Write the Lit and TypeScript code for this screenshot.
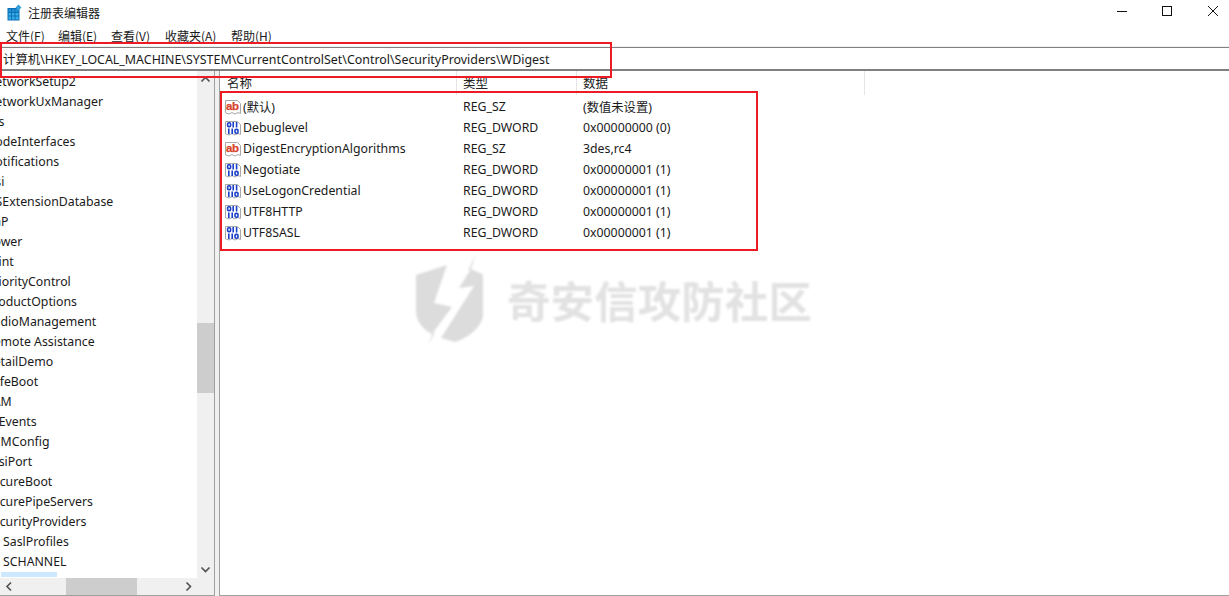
import { LitElement, html, css, svg } from "lit";
import { customElement } from "lit/decorators.js";

const TREE: [string, boolean][] = [
  ["NetworkSetup2", false], ["NetworkUxManager", false], ["Nls", false], ["NodeInterfaces", false],
  ["Notifications", false], ["Nsi", false], ["OSExtensionDatabase", false], ["PnP", false],
  ["Power", false], ["Print", false], ["PriorityControl", false], ["ProductOptions", false],
  ["RadioManagement", false], ["Remote Assistance", false], ["RetailDemo", false], ["SafeBoot", false],
  ["SAM", false], ["ScEvents", false], ["SCMConfig", false], ["ScsiPort", false],
  ["SecureBoot", false], ["SecurePipeServers", false], ["SecurityProviders", false],
  ["SaslProfiles", true], ["SCHANNEL", true],
];

const ROWS: [string, string, string][] = [
  ["(默认)", "REG_SZ", "(数值未设置)"],
  ["Debuglevel", "REG_DWORD", "0x00000000 (0)"],
  ["DigestEncryptionAlgorithms", "REG_SZ", "3des,rc4"],
  ["Negotiate", "REG_DWORD", "0x00000001 (1)"],
  ["UseLogonCredential", "REG_DWORD", "0x00000001 (1)"],
  ["UTF8HTTP", "REG_DWORD", "0x00000001 (1)"],
  ["UTF8SASL", "REG_DWORD", "0x00000001 (1)"],
];

const page = svg`<path d="M0.5 1.5H12.5L15.5 4.5V14.5L13 13.5L10 15L7 13.6L4 15L0.5 13.8Z" fill="#fff" stroke="#a8a8a8"/>`;
const abIcon = html`<svg class="ic" viewBox="0 0 16 16">${page}
  <text x="7.4" y="11" text-anchor="middle" font-family="Liberation Sans, sans-serif" font-weight="700" font-size="11.5" letter-spacing="-0.3" stroke="#d8452a" stroke-width="0.25" fill="#d8452a">ab</text></svg>`;
const binIcon = html`<svg class="ic" viewBox="0 0 16 16">${page}
  <g fill="none" stroke="#1a3fc8" stroke-width="1.6">
    <rect x="2.6" y="2.8" width="3" height="3.8" rx="1.2"/>
    <path d="M8.2 2V7.4M11.6 2V7.4"/>
    <path d="M3.8 8.6V14M7.2 8.6V14"/>
    <rect x="10" y="9.4" width="3" height="3.8" rx="1.2"/>
  </g></svg>`;

@customElement("app-root")
export class AppRoot extends LitElement {
  static styles = css`
    :host { display: block; position: relative; width: 1229px; height: 596px; overflow: hidden; background: #fff;
      font-family: "Noto Sans", "Noto Sans CJK SC", sans-serif; font-size: 12.3px; color: #1a1a1a; }
    .win { display: flex; flex-direction: column; height: 596px; }
    .title { height: 24px; flex: none; display: flex; align-items: center; padding-left: 7px; gap: 6px; font-size: 12px; }
    .title .name { font-family: "Noto Sans CJK SC", sans-serif; flex: 1; }
    .ctl { display: flex; align-self: flex-start; }
    .ctl svg { width: 46px; height: 22px; display: block; }
    .menu { height: 22px; flex: none; display: flex; align-items: center; padding-left: 6px; font-size: 12px; font-family: "Noto Sans CJK SC", sans-serif; border-bottom: 1px solid #f0f0f0; box-sizing: content-box; }
    .menu span { display: block; }
    .m1 { width: 52px; } .m2 { width: 53px; } .m3 { width: 54px; } .m4 { width: 66px; }
    .addr { height: 21px; flex: none; display: flex; align-items: center; padding-left: 3px; border-top: 1px solid #808080; border-bottom: 2px solid #808080; white-space: nowrap; font-size: 12.42px; }
    .panes { flex: 1; min-height: 0; display: flex; background: #f0f0f0; }
    .left { width: 214px; flex: none; display: grid; grid-template-columns: 197px 17px; grid-template-rows: 1fr 17px; border-right: 1px solid #a0a0a0; border-bottom: 1px solid #a0a0a0; }
    .tree { background: #fff; overflow: hidden; min-height: 0; padding-top: 1px; }
    .node { height: 20px; line-height: 20px; margin-left: -14px; white-space: nowrap; }
    .node.child { margin-left: 3px; }
    .sel { width: 56px; height: 5px; margin-left: 1px; background: #cce8ff; }
    .vbar { background: #f0f0f0; display: flex; flex-direction: column; min-height: 0; }
    .vbar svg, .hbar svg { flex: none; display: block; }
    .vtrack { flex: 1; padding-top: 235px; }
    .vthumb { height: 70px; background: #cdcdcd; }
    .corner { background: #f0f0f0; }
    .hbar { grid-column: 1; background: #f0f0f0; display: flex; align-items: stretch; width: 197px; }
    .htrack { flex: 1; padding-left: 49px; }
    .hthumb { width: 71px; height: 100%; background: #cdcdcd; }
    .right { margin-left: 4px; flex: 1; background: #fff; border-left: 1px solid #a0a0a0; border-bottom: 1px solid #a0a0a0; min-width: 0; }
    .head { height: 24px; display: grid; grid-template-columns: 237px 120px 288px; }
    .head div { padding-left: 6px; border-right: 1px solid #e5e5e5; font-family: "Noto Sans CJK SC", sans-serif; font-size: 12.5px; line-height: 24px; color: #222; }
    .head div:first-child { padding-left: 7px; }
    .rows { padding-top: 1px; }
    .row { height: 21px; display: grid; grid-template-columns: 237px 120px 1fr; align-items: center; white-space: nowrap; }
    .cell-name { display: flex; align-items: center; padding-left: 5px; gap: 2px; }
    .cell { padding-left: 6px; }
    .ic { width: 16px; height: 16px; flex: none; display: block; }
    .redbox { position: absolute; border: 2px solid #ed1c24; box-sizing: border-box; pointer-events: none; }
    .r1 { left: 0; top: 42px; width: 612px; height: 36px; }
    .r2 { left: 220px; top: 91px; width: 538px; height: 160px; }
    .mark { position: absolute; left: 411px; top: 254px; display: flex; align-items: center; gap: 24px; filter: blur(0.8px); pointer-events: none; }
    .mark svg { width: 72px; height: 92px; display: block; }
    .mark span { font-family: "Noto Sans CJK SC", sans-serif; font-weight: 700; font-size: 43.4px; letter-spacing: 0.2px; color: #e2e2e2; line-height: 1; white-space: nowrap; }
  `;

  render() {
    return html`
      <div class="win">
        <div class="title">
          <svg width="15" height="17" viewBox="0 0 15 17">
            <rect x="0.5" y="4" width="12" height="12.5" fill="#0f70b4"/>
            <path fill="#1e8fd6" d="M1.5 5H4V8H1.5ZM5 5H7.5V8H5ZM8.5 5H11.5V8H8.5Z"/>
            <path fill="#35aeea" d="M1.5 9H4V11.5H1.5ZM5 9H7.5V11.5H5ZM8.5 9H11.5V11.5H8.5ZM1.5 12.5H4V15.5H1.5ZM5 12.5H7.5V15.5H5ZM8.5 12.5H11.5V15.5H8.5Z"/>
            <path d="M11.5 0.5L14.5 3.5L11.5 6.5L8.5 3.5Z" fill="#3aa0dc"/>
          </svg>
          <span class="name">注册表编辑器</span>
          <div class="ctl">
            <svg viewBox="0 0 46 22"><path d="M26 11.5H36" stroke="#111"/></svg>
            <svg viewBox="0 0 46 22"><rect x="25.5" y="6.5" width="9" height="9" fill="none" stroke="#111"/></svg>
            <svg viewBox="0 0 46 22"><path d="M25 6L35 16M35 6L25 16" stroke="#111" fill="none"/></svg>
          </div>
        </div>
        <div class="menu">
          <span class="m1">文件(F)</span><span class="m2">编辑(E)</span><span class="m3">查看(V)</span><span class="m4">收藏夹(A)</span><span>帮助(H)</span>
        </div>
        <div class="addr">计算机\\HKEY_LOCAL_MACHINE\\SYSTEM\\CurrentControlSet\\Control\\SecurityProviders\\WDigest</div>
        <div class="panes">
          <div class="left">
            <div class="tree">
              ${TREE.map(([n, c]) => html`<div class="node ${c ? "child" : ""}">${n}</div>`)}
              <div class="sel"></div>
            </div>
            <div class="vbar">
              <svg width="17" height="17" viewBox="0 0 17 17"><path d="M4.5 10.5L8.5 6.5L12.5 10.5" fill="none" stroke="#505050" stroke-width="1.6"/></svg>
              <div class="vtrack"><div class="vthumb"></div></div>
              <svg width="17" height="17" viewBox="0 0 17 17"><path d="M4.5 6.5L8.5 10.5L12.5 6.5" fill="none" stroke="#505050" stroke-width="1.6"/></svg>
            </div>
            <div class="hbar">
              <svg width="17" height="17" viewBox="0 0 17 17"><path d="M11 4.5L7 8.5L11 12.5" fill="none" stroke="#505050" stroke-width="1.6"/></svg>
              <div class="htrack"><div class="hthumb"></div></div>
              <svg width="17" height="17" viewBox="0 0 17 17"><path d="M6.5 4.5L10.5 8.5L6.5 12.5" fill="none" stroke="#505050" stroke-width="1.6"/></svg>
            </div>
            <div class="corner"></div>
          </div>
          <div class="right">
            <div class="head"><div>名称</div><div>类型</div><div>数据</div></div>
            <div class="rows">
              ${ROWS.map(([n, t, d]) => html`<div class="row">
                <div class="cell-name">${t === "REG_SZ" ? abIcon : binIcon}<span>${n}</span></div>
                <div class="cell">${t}</div>
                <div class="cell">${d}</div>
              </div>`)}
            </div>
          </div>
        </div>
      </div>
      <div class="redbox r1"></div>
      <div class="redbox r2"></div>
      <div class="mark">
        <svg viewBox="0 0 72 92">
          <path fill="#dcdcdc" d="M5 21L36 11L23 49L41 53L21 80C10 74 5 66 5 56Z"/>
          <path fill="#dcdcdc" d="M60 15L73 21V56C73 72 58 84 44 88L30 84L63 32L48 34Z"/>
          <path fill="#dcdcdc" d="M65 0L60 15L57 17ZM21 80L18 90L24 78Z"/>
        </svg>
        <span>奇安信攻防社区</span>
      </div>
    `;
  }
}
